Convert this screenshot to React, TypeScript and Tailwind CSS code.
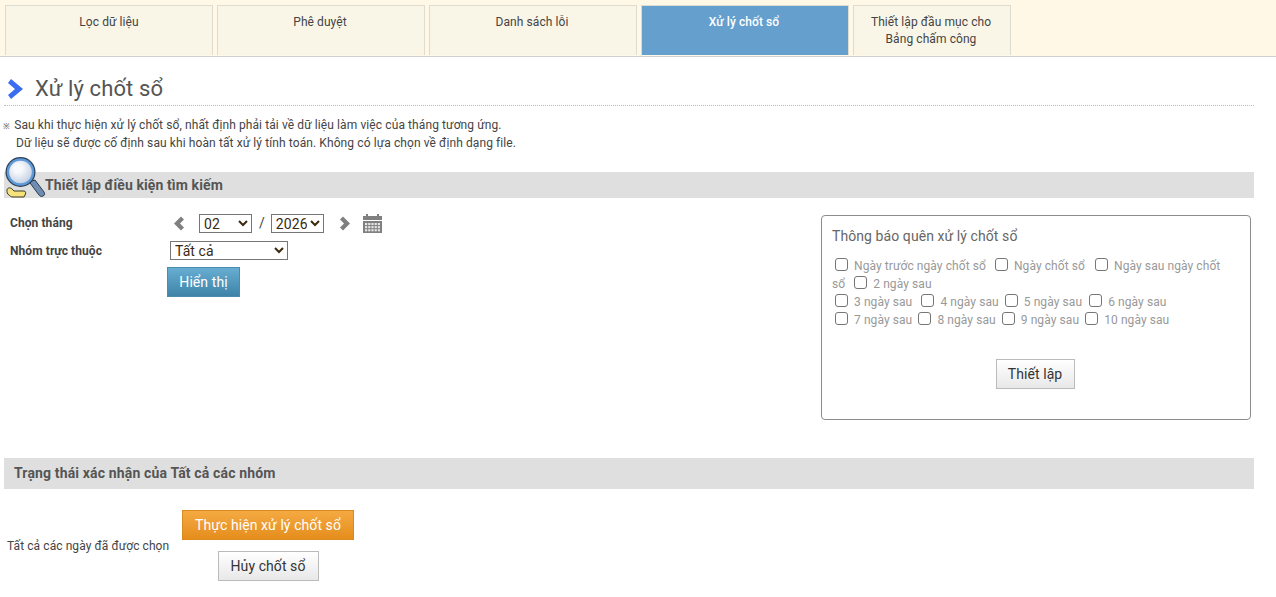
import React from 'react';

const tabs = [
  { label: 'Lọc dữ liệu', width: 'w-[208px]', padding: 'pr-0' },
  { label: 'Phê duyệt', width: 'w-[208px]', padding: 'pr-[2px]' },
  { label: 'Danh sách lỗi', width: 'w-[208px]', padding: 'pr-[2px]' },
  { label: 'Xử lý chốt sổ', width: 'w-[208px]', padding: 'pr-[2px]', active: true },
  { label: 'Thiết lập đầu mục cho\nBảng chấm công', width: 'w-[158px]', padding: 'pr-[2px]' },
];

function Check({ className = '' }: { className?: string }) {
  return (
    <input
      type="checkbox"
      className={`appearance-none inline-block w-[13px] h-[13px] border border-[#767676] rounded-[3px] bg-white align-[-1px] ${className}`}
    />
  );
}

function Magnifier() {
  return (
    <svg width="41" height="42" viewBox="0 0 41 42" className="absolute left-[1px] top-[-15px]">
      <defs>
        <radialGradient id="lens" cx="0.4" cy="0.35" r="0.7">
          <stop offset="0.25" stopColor="#f7f9fc" />
          <stop offset="1" stopColor="#c3cfe2" />
        </radialGradient>
      </defs>
      <path d="M2 33c0-2 3-3 5-1l2 2 10 0c2 0 2 3 1 4l-1 2-11 0c-2 0-3-1-4-2-2-1-2-3-2-5z" fill="#f5e27a" stroke="#3a3a2a" strokeWidth="1" />
      <path d="M27 24l3-1 9 12c1 2 1 3-1 4-2 1-3 0-4-1l-9-12z" fill="#6f8db0" stroke="#2b3a4d" strokeWidth="1" />
      <circle cx="15.5" cy="15" r="15" fill="#2c3e55" />
      <circle cx="15.5" cy="15" r="13.8" fill="#5f9ad9" />
      <circle cx="15.5" cy="15" r="11.3" fill="url(#lens)" />
    </svg>
  );
}

function ArrowButton({ dir }: { dir: 'left' | 'right' }) {
  return (
    <svg width="11" height="15" viewBox="0 0 11 15">
      <path d={dir === 'left' ? 'M8 0.5 L1 7.5 L8 14.5 L11 11.5 L7 7.5 L11 3.5 Z' : 'M3 0.5 L10 7.5 L3 14.5 L0 11.5 L4 7.5 L0 3.5 Z'} fill="#808080" />
    </svg>
  );
}

function CalendarIcon() {
  return (
    <svg width="19" height="20" viewBox="0 0 19 20">
      <path d="M0 3h3V1h2v2h9V1h2v2h3v4H0z" fill="#808080" />
      <path d="M0 8h19v12H0z" fill="#808080" />
      {[0, 1, 2].map((r) =>
        [0, 1, 2, 3, 4].map((c) => <rect key={`${r}-${c}`} x={2 + c * 3.2} y={10 + r * 3.1} width="2.2" height="2.1" fill="#e6e6e6" />)
      )}
    </svg>
  );
}

export default function App() {
  return (
    <div className="font-['Roboto',sans-serif] text-[12px] tracking-[0.08px] text-[#333] bg-white min-h-[597px]">
      {/* Tabs */}
      <div className="h-[57px] bg-[#fff8e6] border-b border-[#d0d0d0] pl-[5px] pt-[5px] flex gap-[4px]">
        {tabs.map((t) => (
          <div
            key={t.label}
            className={`${t.width} ${t.padding} h-[50px] border border-b-0 border-[#dcdcd0] pt-[8px] text-center whitespace-pre-line leading-[17px] ${
              t.active ? 'bg-[#659fce] text-white font-medium' : 'bg-[#f9f6e8] text-[#444]'
            }`}
          >
            {t.label}
          </div>
        ))}
      </div>

      {/* Title */}
      <div className="mx-[4px] w-[1250px] h-[49px] border-b border-dotted border-[#bbb] flex items-center pt-[15px] gap-[10px]">
        <svg width="17" height="20" viewBox="0 0 17 20" className="ml-[4px]">
          <path d="M3 0 L15 10 L3 20 L0 16 L7 10 L0 4 Z" fill="#3a6df0" />
        </svg>
        <h1 className="text-[22px] leading-[30px] tracking-[0.12px] text-[#555]">Xử lý chốt sổ</h1>
      </div>

      {/* Note */}
      <div className="pt-[10px] pl-[3px] leading-[18px] tracking-[0.1px] text-[#444]">
        <p><span className="text-[8px] leading-[0] mr-[1px]">※</span> Sau khi thực hiện xử lý chốt sổ, nhất định phải tải về dữ liệu làm việc của tháng tương ứng.</p>
        <p className="pl-[13px]">Dữ liệu sẽ được cố định sau khi hoàn tất xử lý tính toán. Không có lựa chọn về định dạng file.</p>
      </div>

      {/* Search section */}
      <div className="relative mt-[20px] mx-[4px] w-[1250px] h-[26px] bg-[#dfdfdf] pl-[41px] text-[14px] leading-[26px] font-bold tracking-[0.1px] text-[#555]">
        <Magnifier />
        Thiết lập điều kiện tìm kiếm
      </div>

      <div className="flex justify-between pl-[10px] pr-[25px] pt-[15px]">
        <div className="text-[#444]">
          <div className="flex items-center h-[20px] mb-[8px]">
            <label className="w-[163px] font-bold">Chọn tháng</label>
            <ArrowButton dir="left" />
            <select className="ml-[15px] w-[53px] h-[19px] border border-[#767676] text-[14px] text-[#3a2a10]">
              <option>02</option>
            </select>
            <span className="ml-[7px] mr-[6px] text-[14px]">/</span>
            <select className="w-[53px] h-[19px] border border-[#767676] text-[14px] text-[#3a2a10]">
              <option>2026</option>
            </select>
            <span className="ml-[16px] mr-[12px]"><ArrowButton dir="right" /></span>
            <CalendarIcon />
          </div>
          <div className="flex items-center h-[19px]">
            <label className="w-[160px] font-bold">Nhóm trực thuộc</label>
            <select className="w-[118px] h-[19px] border border-[#767676] text-[14px] text-[#3a2a10]">
              <option>Tất cả</option>
            </select>
          </div>
          <div className="pl-[157px] pt-[7px]">
            <button className="w-[73px] h-[30px] border border-[#4a8cb0] bg-gradient-to-b from-[#67aed2] to-[#3f83a8] text-white text-[14px]">
              Hiển thị
            </button>
          </div>
        </div>

        <div className="mt-[2px] w-[430px] h-[205px] border border-[#8c8c8c] rounded-[4px] px-[10px] pt-[10px]">
          <h3 className="text-[14px] leading-[20px] text-[#666]">Thông báo quên xử lý chốt sổ</h3>
          <div className="mt-[11px] pr-[14px] leading-[18px] text-[#999]">
            <Check className="ml-[3px] mr-[6px]" />Ngày trước ngày chốt sổ{' '}
            <Check className="ml-[6px] mr-[6px]" />Ngày chốt sổ{' '}
            <Check className="ml-[7px] mr-[6px]" />Ngày sau ngày chốt sổ{' '}
            <Check className="ml-[6px] mr-[6px]" />2 ngày sau
            <br />
            <Check className="ml-[3px] mr-[6px]" />3 ngày sau{' '}
            <Check className="ml-[6px] mr-[6px]" />4 ngày sau{' '}
            <Check className="ml-[3px] mr-[6px]" />5 ngày sau{' '}
            <Check className="ml-[4px] mr-[6px]" />6 ngày sau
            <br />
            <Check className="ml-[3px] mr-[6px]" />7 ngày sau{' '}
            <Check className="ml-[3px] mr-[6px]" />8 ngày sau{' '}
            <Check className="ml-[3px] mr-[6px]" />9 ngày sau{' '}
            <Check className="ml-[3px] mr-[6px]" />10 ngày sau
          </div>
          <div className="mt-[30px] pr-[2px] flex justify-center">
            <button className="w-[79px] h-[30px] border border-[#bbb] bg-gradient-to-b from-white to-[#e8e8e8] text-[14px] text-[#333]">
              Thiết lập
            </button>
          </div>
        </div>
      </div>

      {/* Status section */}
      <div className="mt-[38px] mx-[4px] w-[1250px] h-[31px] bg-[#dfdfdf] pl-[10px] text-[14px] leading-[30px] font-bold tracking-[0.15px] text-[#555]">
        Trạng thái xác nhận của Tất cả các nhóm
      </div>

      <div className="flex items-center pl-[7px] pt-[21px]">
        <span className="w-[175px] text-[#444]">Tất cả các ngày đã được chọn</span>
        <div className="w-[172px] flex flex-col items-center gap-[11px]">
          <button className="w-[172px] h-[30px] border border-[#d98a20] bg-gradient-to-b from-[#f4aa41] to-[#e58d1b] text-white text-[14px]">
            Thực hiện xử lý chốt sổ
          </button>
          <button className="w-[101px] h-[30px] border border-[#bbb] bg-gradient-to-b from-white to-[#e8e8e8] text-[14px] text-[#333]">
            Hủy chốt sổ
          </button>
        </div>
      </div>
    </div>
  );
}
